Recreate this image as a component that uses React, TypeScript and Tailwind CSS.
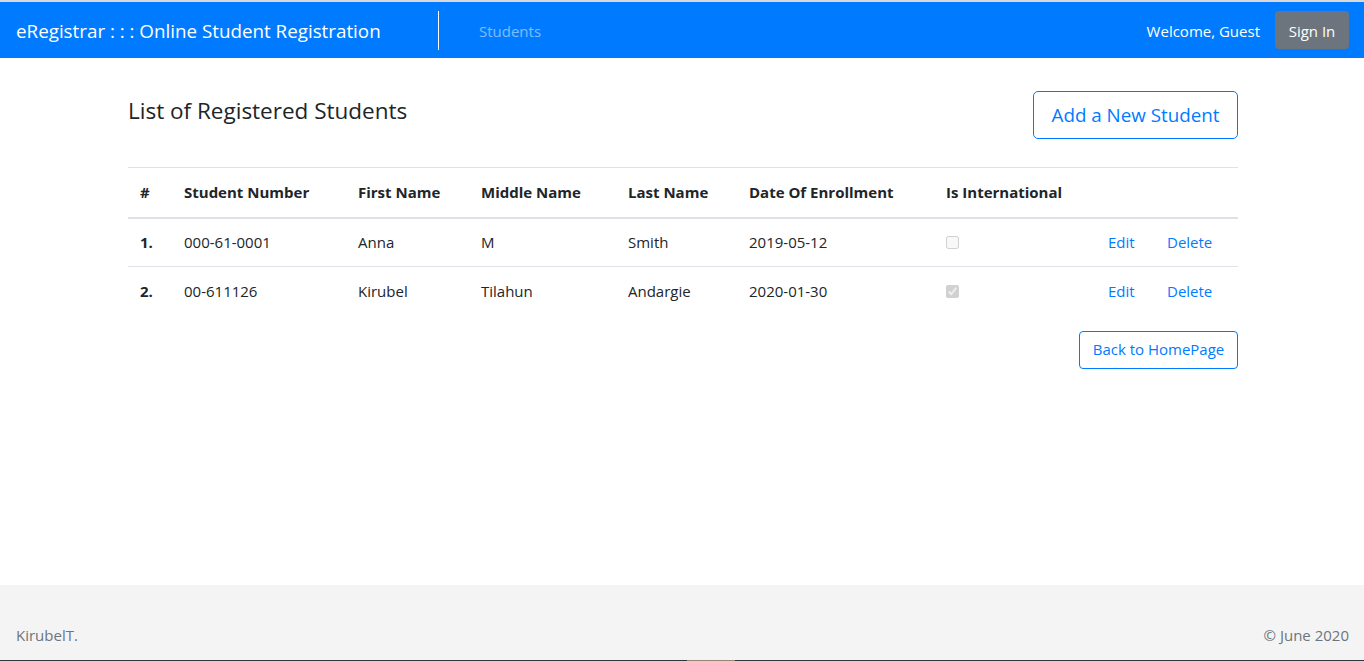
import { memo } from "react";

type Student = {
  no: string;
  number: string;
  first: string;
  middle: string;
  last: string;
  enrolled: string;
  international: boolean;
};

const students: Student[] = [
  { no: "1.", number: "000-61-0001", first: "Anna", middle: "M", last: "Smith", enrolled: "2019-05-12", international: false },
  { no: "2.", number: "00-611126", first: "Kirubel", middle: "Tilahun", last: "Andargie", enrolled: "2020-01-30", international: true },
];

function AppComponent() {
  return (
    <div className="flex h-screen flex-col bg-white font-['Open_Sans',sans-serif] text-[15px] text-[#212529]">
      {/* top strip */}
      <div className="h-[2px] bg-[#d9d9d9]" />

      {/* Navbar */}
      <nav className="flex h-[56px] items-center bg-[#007bff] pl-[16px] pr-[15px]">
        <span className="mt-[3px] w-[366px] text-[18.8px] text-white">eRegistrar : : : Online Student Registration</span>
        <span className="ml-[56px] h-[39px] w-px bg-white" />
        <a className="ml-[40px] mt-[2px] text-[rgba(255,255,255,0.5)]">Students</a>
        <div className="ml-auto flex items-center gap-[15px]">
          <span className="mt-[2px] text-white">Welcome, Guest</span>
          <button className="h-[38px] w-[74px] rounded-[4px] bg-[#6c757d] pt-[2px] text-white">Sign In</button>
        </div>
      </nav>

      {/* Main */}
      <main className="flex-1">
        <div className="ml-[128px] w-[1110px] pt-[33px]">
          <div className="flex items-start justify-between">
            <h4 className="mt-[3px] text-[22.5px] font-normal">List of Registered Students</h4>
            <button className="h-[48px] w-[205px] rounded-[5px] border border-[#007bff] text-[18.8px] text-[#007bff]">
              Add a New Student
            </button>
          </div>

          <table className="mt-[28px] w-full table-fixed border-collapse text-left">
            <thead>
              <tr className="h-[50px] border-t border-b-2 border-t-[#dee2e6] border-b-[#dee2e6]">
                <th className="w-[44px] px-[12px] font-bold">#</th>
                <th className="w-[174px] px-[12px] font-bold">Student Number</th>
                <th className="w-[123px] px-[12px] font-bold">First Name</th>
                <th className="w-[147px] px-[12px] font-bold">Middle Name</th>
                <th className="w-[121px] px-[12px] font-bold">Last Name</th>
                <th className="w-[197px] px-[12px] font-bold">Date Of Enrollment</th>
                <th className="w-[162px] px-[12px] font-bold">Is International</th>
                <th className="w-[59px] px-[12px]" />
                <th className="w-[83px] px-[12px]" />
              </tr>
            </thead>
            <tbody>
              {students.map((s, i) => (
                <tr key={s.no} className={i === 0 ? "h-[49px] border-b border-[#dee2e6]" : "h-[49px]"}>
                  <td className="px-[12px] font-bold">{s.no}</td>
                  <td className="px-[12px]">{s.number}</td>
                  <td className="px-[12px]">{s.first}</td>
                  <td className="px-[12px]">{s.middle}</td>
                  <td className="px-[12px]">{s.last}</td>
                  <td className="px-[12px]">{s.enrolled}</td>
                  <td className="px-[12px]">
                    <input type="checkbox" disabled defaultChecked={s.international} className="m-0 h-[13px] w-[13px] align-[-1px]" />
                  </td>
                  <td className="px-[12px] text-[#007bff]">Edit</td>
                  <td className="px-[12px] text-[#007bff]">Delete</td>
                </tr>
              ))}
            </tbody>
          </table>

          <div className="mt-[15px] flex justify-end">
            <button className="h-[38px] w-[159px] rounded-[4px] border border-[#007bff] text-[#007bff]">
              Back to HomePage
            </button>
          </div>
        </div>
      </main>

      {/* Footer */}
      <footer className="flex h-[75px] items-end justify-between bg-[#f4f4f4] pl-[16px] pr-[15px] pb-[14px] text-[#6c757d]">
        <span>KirubelT.</span>
        <span>© June 2020</span>
      </footer>
      <div className="flex h-[1px] bg-[#33373d]">
        <span className="ml-[687px] w-[48px] bg-[#9a8573]" />
      </div>
    </div>
  );
}

const App = memo(AppComponent);
export default App;
